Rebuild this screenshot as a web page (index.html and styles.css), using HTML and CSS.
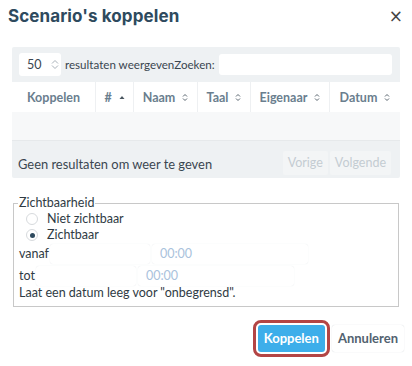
FILE: index.html
```html
<!DOCTYPE html>
<html lang="nl">
<head>
<meta charset="UTF-8">
<title>Scenario's koppelen</title>
<link rel="stylesheet" href="styles.css">
</head>
<body>
<div class="modal">
	<div class="modal-header">
		<h4 class="modal-title">Scenario's koppelen</h4>
		<span class="close">&times;</span>
	</div>
	<div class="modal-body">
		<div class="table-wrap">
			<div class="table-top">
				<div class="length-select">50 <span class="spin"><svg width="8" height="11" viewBox="0 0 8 11"><path d="M1 4.5 L4 1.5 L7 4.5 M1 6.5 L4 9.5 L7 6.5" fill="none" stroke="#a9b2ba" stroke-width="1"/></svg></span></div>
				<span class="length-label">resultaten weergevenZoeken:</span>
				<div class="search-input"></div>
			</div>
			<div class="table-head">
				<div class="th c1">Koppelen</div>
				<div class="th c2"># <svg class="sort" width="6" height="5" viewBox="0 0 6 5"><path d="M0.5 4 L3 1 L5.5 4 Z" fill="#4a5660"/></svg></div>
				<div class="th c3">Naam <svg class="sort" width="6" height="9" viewBox="0 0 6 9"><path d="M1 3.5 L3 1.5 L5 3.5 M1 5.5 L3 7.5 L5 5.5" fill="none" stroke="#5a6670" stroke-width="1"/></svg></div>
				<div class="th c4">Taal <svg class="sort" width="6" height="9" viewBox="0 0 6 9"><path d="M1 3.5 L3 1.5 L5 3.5 M1 5.5 L3 7.5 L5 5.5" fill="none" stroke="#5a6670" stroke-width="1"/></svg></div>
				<div class="th c5">Eigenaar <svg class="sort" width="6" height="9" viewBox="0 0 6 9"><path d="M1 3.5 L3 1.5 L5 3.5 M1 5.5 L3 7.5 L5 5.5" fill="none" stroke="#5a6670" stroke-width="1"/></svg></div>
				<div class="th c6">Datum <svg class="sort" width="6" height="9" viewBox="0 0 6 9"><path d="M1 3.5 L3 1.5 L5 3.5 M1 5.5 L3 7.5 L5 5.5" fill="none" stroke="#5a6670" stroke-width="1"/></svg></div>
			</div>
			<div class="table-empty"></div>
			<div class="table-foot">
				<span class="info">Geen resultaten om weer te geven</span>
				<div class="pager">
					<span class="page-btn">Vorige</span>
					<span class="page-btn">Volgende</span>
				</div>
			</div>
		</div>

		<fieldset class="visibility">
			<legend>Zichtbaarheid</legend>
			<div class="radio-row"><span class="radio"></span>Niet zichtbaar</div>
			<div class="radio-row"><span class="radio checked"></span>Zichtbaar</div>
			<div class="date-row">
				<span>vanaf</span>
				<div class="date-input"></div>
				<div class="time-input">00:00</div>
			</div>
			<div class="date-row">
				<span>tot</span>
				<div class="date-input"></div>
				<div class="time-input">00:00</div>
			</div>
			<div class="hint">Laat een datum leeg voor "onbegrensd".</div>
		</fieldset>
	</div>
	<div class="modal-footer">
		<span class="btn btn-primary">Koppelen</span>
		<span class="btn btn-default">Annuleren</span>
	</div>
</div>
</body>
</html>
```

FILE: styles.css
```css
body {
	margin: 0;
	background: #fff;
	font-family: "Lato", "Open Sans", sans-serif;
	font-size: 12.5px;
	color: #34495e;
}

.modal {
	width: 412px;
	height: 366px;
	background: #fff;
}

.modal-header {
	display: flex;
	justify-content: space-between;
	align-items: center;
	height: 32px;
	padding: 0 8px 0 8px;
}

.modal-title {
	margin: 0;
	font-family: "Inter", "Lato", sans-serif;
	font-size: 17px;
	font-weight: 700;
	color: #2e4a5e;
	letter-spacing: 0.1px;
}

.close {
	font-family: "DejaVu Sans", sans-serif;
	font-size: 17px;
	color: #444;
	margin-right: 1px;
}

.modal-body {
	padding: 15px 12px 0 12px;
}

.table-wrap {
	background: #eef1f3;
	border-radius: 2px;
}

.table-top {
	display: flex;
	align-items: center;
	height: 35px;
	padding: 0 8px 0 7px;
}

.length-select {
	width: 42px;
	height: 23px;
	box-sizing: border-box;
	background: #fff;
	border-radius: 3px;
	display: flex;
	align-items: center;
	padding-left: 8px;
	color: #3a4650;
}

.spin {
	margin-left: 9px;
	display: flex;
}

.length-label {
	margin-left: 4px;
	color: #3a4650;
	font-size: 11.6px;
	white-space: nowrap;
}

.search-input {
	flex: 1;
	height: 21px;
	background: #fff;
	border-radius: 3px;
	margin-left: 4px;
}

.table-head {
	display: flex;
	height: 30px;
	background: #fff;
}

.th {
	display: flex;
	align-items: center;
	justify-content: center;
	font-weight: 700;
	color: #6a7e8e;
	border-right: 1px solid #eef0f2;
	box-sizing: border-box;
}

.c1 { width: 84px; }
.c2 { width: 38px; }
.c3 { width: 64px; }
.c4 { width: 53px; }
.c5 { width: 79px; }
.c6 { flex: 1; border-right: 0; }

.sort {
	margin-left: 7px;
}

.table-empty {
	height: 28px;
	background: #f7f8f9;
	border-bottom: 1px solid #e6e9eb;
}

.table-foot {
	display: flex;
	align-items: center;
	justify-content: space-between;
	height: 37px;
	padding: 0 9px 0 6px;
}

.info {
	margin-top: 8px;
	font-size: 12.9px;
	color: #3a4650;
}

.pager {
	display: flex;
	gap: 2px;
	align-self: flex-end;
	margin-bottom: 3px;
}

.page-btn {
	height: 24px;
	line-height: 24px;
	padding: 0 5px;
	background: #f3f5f6;
	color: #c4ccd2;
	border-radius: 2px;
}

.visibility {
	margin: 17px 1px 0 1px;
	padding: 0 4px 5px 5px;
	border: 1px solid #c8c8c8;
	line-height: 16px;
	color: #2f3b44;
}

.visibility legend {
	padding: 0 1px;
	margin-left: -1px;
	color: #2f3b44;
}

.radio-row {
	display: flex;
	align-items: center;
	margin-left: 7px;
	height: 16px;
}

.radio {
	width: 12px;
	height: 12px;
	border: 1px solid #d7dadd;
	border-radius: 50%;
	margin-right: 9px;
	box-sizing: border-box;
	display: flex;
	align-items: center;
	justify-content: center;
}

.radio.checked::after {
	content: "";
	width: 5px;
	height: 5px;
	border-radius: 50%;
	background: #2e4a5e;
}

.date-row {
	display: flex;
	align-items: center;
	height: 22px;
}

.date-row:first-of-type {
	margin-top: -2px;
}

.date-input {
	width: 100px;
	height: 20px;
	background: #fff;
	border-radius: 3px;
	box-shadow: 0 0 1px #dfe3e6;
	margin-left: 1px;
}

.time-input {
	width: 148px;
	height: 20px;
	line-height: 20px;
	padding-left: 8px;
	margin-left: 2px;
	color: #a9c2dc;
	box-shadow: 0 0 1px #dfe3e6;
	border-radius: 3px;
}

.hint {
	margin-top: -2px;
}

.modal-footer {
	display: flex;
	justify-content: flex-end;
	align-items: center;
	padding: 18px 8px 0 0;
	gap: 7px;
}

.btn {
	height: 27px;
	line-height: 27px;
	border-radius: 3px;
	font-weight: 700;
	font-size: 13px;
	padding: 0 6px;
}

.btn-primary {
	background: #3daeea;
	color: #fff;
	outline: 3px solid #b34545;
	outline-offset: 2px;
}

.btn-default {
	background: #fff;
	color: #526270;
	box-shadow: 0 0 1px #c9ced2;
}
```
